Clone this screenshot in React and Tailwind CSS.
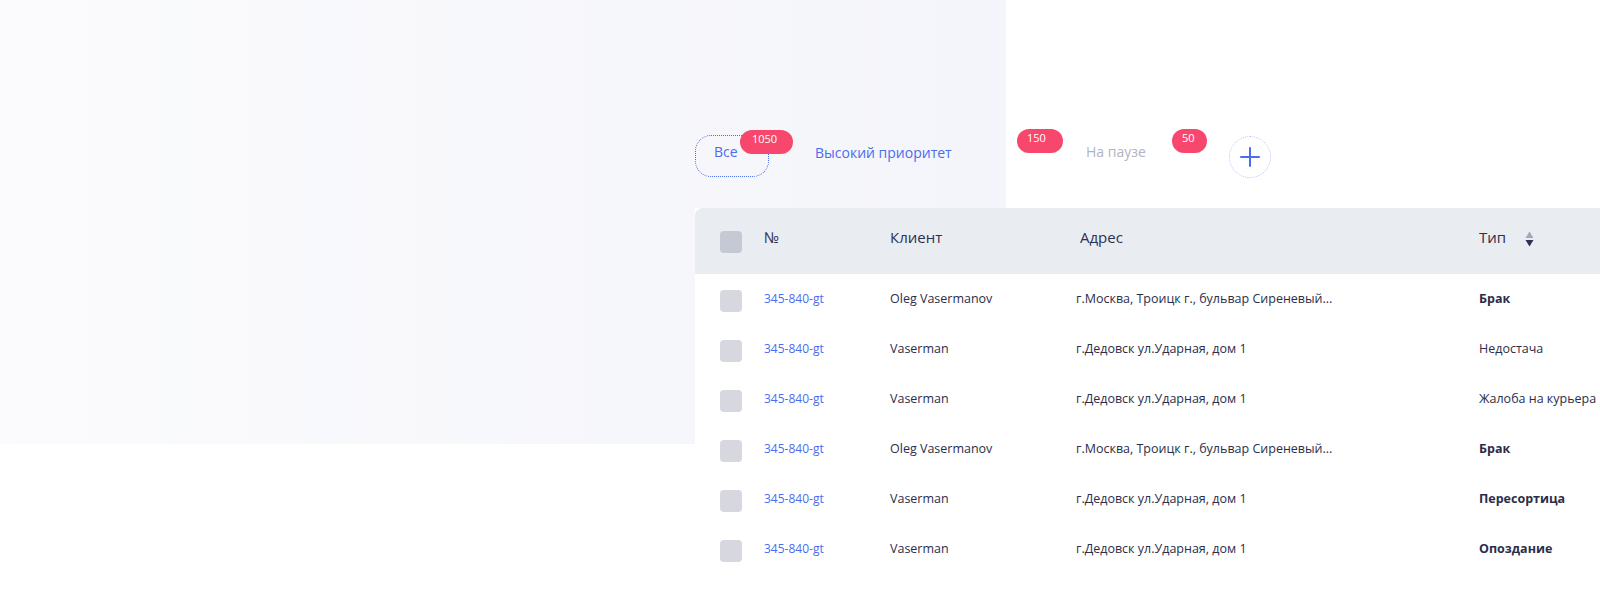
import React from "react";

const rows = [
  { id: "345-840-gt", client: "Oleg Vasermanov", addr: "г.Москва, Троицк г., бульвар Сиреневый...", type: "Брак", bold: true },
  { id: "345-840-gt", client: "Vaserman", addr: "г.Дедовск ул.Ударная, дом 1", type: "Недостача", bold: false },
  { id: "345-840-gt", client: "Vaserman", addr: "г.Дедовск ул.Ударная, дом 1", type: "Жалоба на курьера", bold: false },
  { id: "345-840-gt", client: "Oleg Vasermanov", addr: "г.Москва, Троицк г., бульвар Сиреневый...", type: "Брак", bold: true },
  { id: "345-840-gt", client: "Vaserman", addr: "г.Дедовск ул.Ударная, дом 1", type: "Пересортица", bold: true },
  { id: "345-840-gt", client: "Vaserman", addr: "г.Дедовск ул.Ударная, дом 1", type: "Опоздание", bold: true },
];

function Badge({ children, className }) {
  return (
    <span
      className={
        "absolute top-[-6px] h-[24px] rounded-full bg-[#f7476c] text-white text-[11px] leading-[14px] pt-[2px] " +
        className
      }
    >
      {children}
    </span>
  );
}

export default function App() {
  return (
    <div className="relative w-full h-[600px] overflow-hidden bg-white font-['Open_Sans',_'Noto_Sans',_sans-serif]">
      <div className="absolute left-0 top-0 w-[1006px] h-[444px] bg-gradient-to-r from-[#fbfbfd] to-[#f4f5fa]" />
      <div className="relative pl-[695px] pt-[135px]">
        {/* Tabs */}
        <div className="flex items-start h-[42px]">
          <div className="relative w-[74px] h-[42px] rounded-[16px] border border-dotted border-[#4a6cf0] pl-[18px] pt-[6px] text-[14px] leading-[20px] text-[#4a6cf0]">
            Все
            <Badge className="left-[44px] w-[53px] pl-[12px]">1050</Badge>
          </div>
          <div className="relative ml-[26px] w-[246px] h-[42px] pl-[20px] pt-[8px] text-[14px] leading-[20px] text-[#4a6cf0]">
            Высокий приоритет
            <Badge className="left-[222px] w-[46px] pl-[10px]">150</Badge>
          </div>
          <div className="relative ml-[25px] w-[140px] h-[42px] pl-[20px] pt-[7px] text-[14px] leading-[20px] text-[#b1b4c2]">
            На паузе
            <Badge className="left-[106px] w-[35px] pl-[10px]">50</Badge>
          </div>
          <div className="ml-[23px] mt-[1px] w-[42px] h-[42px] rounded-full border border-dotted border-[#b7c4f3] flex items-center justify-center">
            <svg width="20" height="20" viewBox="0 0 20 20" fill="none">
              <path d="M10 1v18M1 10h18" stroke="#4a6cf0" strokeWidth="2" strokeLinecap="round" />
            </svg>
          </div>
        </div>

        {/* Table */}
        <div className="mt-[31px] w-[1000px] bg-white">
          <div className="flex items-start h-[66px] bg-[#e9ecf1] rounded-tl-[8px] pl-[25px] text-[15px] leading-[20px] font-medium text-[#2d3150]">
            <div className="w-[44px] pt-[23px]">
              <div className="w-[22px] h-[22px] rounded-[4px] bg-[#c5c9d3]" />
            </div>
            <div className="w-[126px] pt-[19px]">№</div>
            <div className="w-[186px] pt-[19px]">Клиент</div>
            <div className="w-[403px] pt-[19px] pl-[4px]">Адрес</div>
            <div className="pt-[19px] flex items-center">
              <span>Тип</span>
              <svg className="ml-[19px] mt-[3px]" width="9" height="16" viewBox="0 0 9 16">
                <path d="M0.5 7 L4.5 0.5 L8.5 7 Z" fill="#a3a7b9" />
                <path d="M0.5 9 L8.5 9 L4.5 15.5 Z" fill="#2e3150" />
              </svg>
            </div>
          </div>
          {rows.map((r, i) => (
            <div key={i} className="flex items-center h-[50px] pl-[25px] text-[12.5px] leading-[18px]">
              <div className="w-[44px] pt-[3px]">
                <div className="w-[22px] h-[22px] rounded-[4px] bg-[#d6d7df]" />
              </div>
              <div className="w-[126px] text-[12px] text-[#4a6cf0]">{r.id}</div>
              <div className="w-[186px] font-medium text-[#2b2e4a]">{r.client}</div>
              <div className="w-[403px] font-medium text-[#2b2e4a]">{r.addr}</div>
              <div className={"text-[#2b2e4a] whitespace-nowrap " + (r.bold ? "font-bold" : "font-medium")}>{r.type}</div>
            </div>
          ))}
        </div>
      </div>
    </div>
  );
}
